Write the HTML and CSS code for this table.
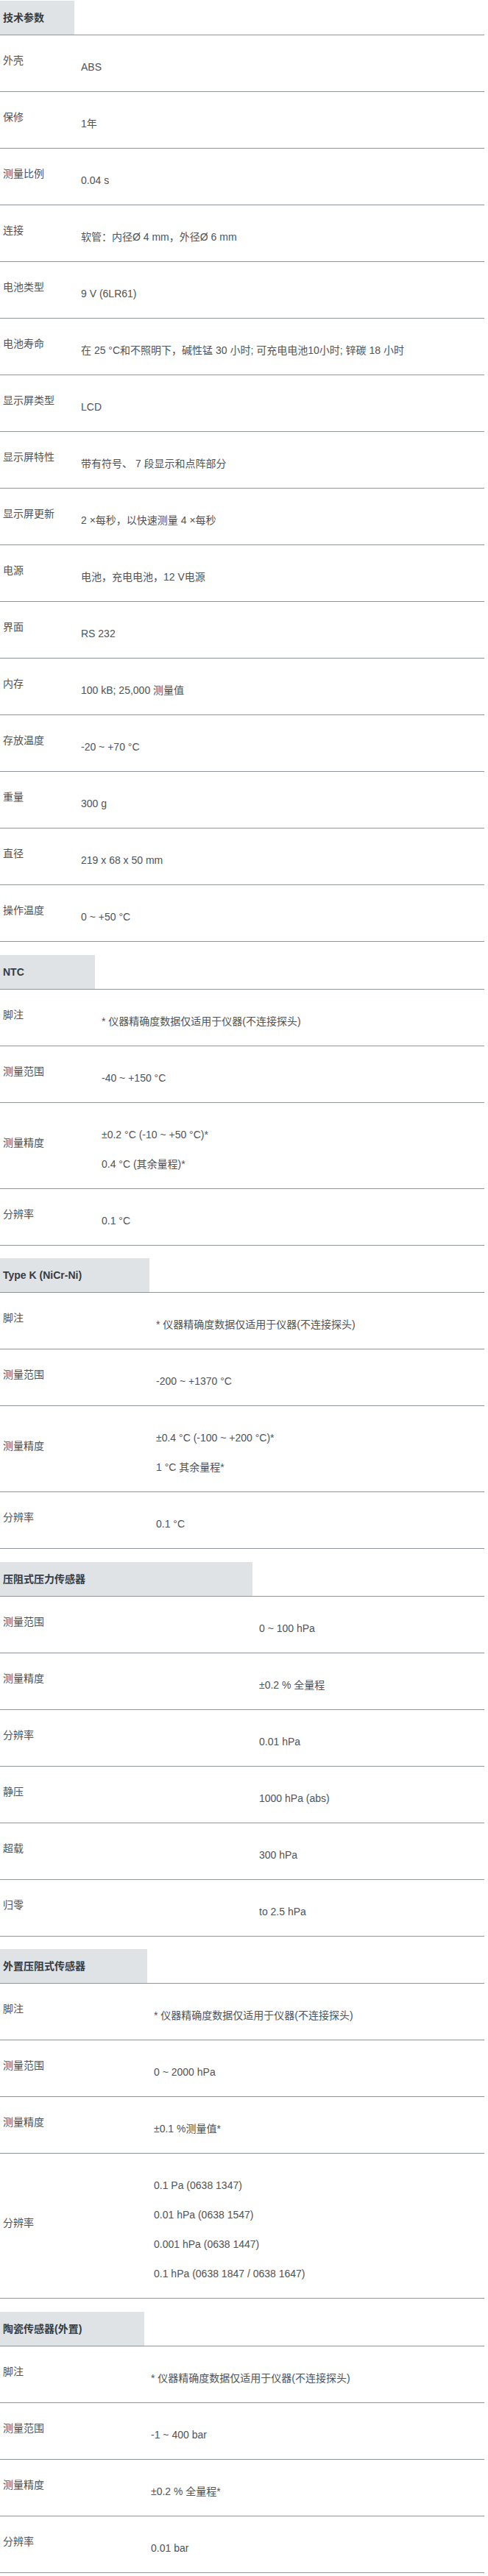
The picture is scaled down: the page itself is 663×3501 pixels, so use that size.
FILE: index.html
```html
<!DOCTYPE html>
<html lang="zh-CN">
<head>
  <meta charset="UTF-8">
  <meta name="viewport" content="width=device-width, initial-scale=1.0">
  <title>技术参数</title>
  <link rel="stylesheet" href="styles.css">
</head>

<body>
  <div class="specs">

    <section class="spec spec-general">
      <div class="spec-head"><h3 class="spec-title">技术参数</h3></div>
      <div class="spec-row"><div class="spec-label">外壳</div><div class="spec-value"><p>ABS</p></div></div>
      <div class="spec-row"><div class="spec-label">保修</div><div class="spec-value"><p>1年</p></div></div>
      <div class="spec-row"><div class="spec-label">测量比例</div><div class="spec-value"><p>0.04 s</p></div></div>
      <div class="spec-row"><div class="spec-label">连接</div><div class="spec-value"><p>软管：内径Ø 4 mm，外径Ø 6 mm</p></div></div>
      <div class="spec-row"><div class="spec-label">电池类型</div><div class="spec-value"><p>9 V (6LR61)</p></div></div>
      <div class="spec-row"><div class="spec-label">电池寿命</div><div class="spec-value"><p>在 25 °C和不照明下，碱性锰 30 小时; 可充电电池10小时; 锌碳 18 小时</p></div></div>
      <div class="spec-row"><div class="spec-label">显示屏类型</div><div class="spec-value"><p>LCD</p></div></div>
      <div class="spec-row"><div class="spec-label">显示屏特性</div><div class="spec-value"><p>带有符号、 7 段显示和点阵部分</p></div></div>
      <div class="spec-row"><div class="spec-label">显示屏更新</div><div class="spec-value"><p>2 ×每秒，以快速测量 4 ×每秒</p></div></div>
      <div class="spec-row"><div class="spec-label">电源</div><div class="spec-value"><p>电池，充电电池，12 V电源</p></div></div>
      <div class="spec-row"><div class="spec-label">界面</div><div class="spec-value"><p>RS 232</p></div></div>
      <div class="spec-row"><div class="spec-label">内存</div><div class="spec-value"><p>100 kB; 25,000 测量值</p></div></div>
      <div class="spec-row"><div class="spec-label">存放温度</div><div class="spec-value"><p>-20 ~ +70 °C</p></div></div>
      <div class="spec-row"><div class="spec-label">重量</div><div class="spec-value"><p>300 g</p></div></div>
      <div class="spec-row"><div class="spec-label">直径</div><div class="spec-value"><p>219 x 68 x 50 mm</p></div></div>
      <div class="spec-row"><div class="spec-label">操作温度</div><div class="spec-value"><p>0 ~ +50 °C</p></div></div>
    </section>

    <section class="spec spec-ntc">
      <div class="spec-head"><h3 class="spec-title">NTC</h3></div>
      <div class="spec-row"><div class="spec-label">脚注</div><div class="spec-value"><p>* 仪器精确度数据仅适用于仪器(不连接探头)</p></div></div>
      <div class="spec-row"><div class="spec-label">测量范围</div><div class="spec-value"><p>-40 ~ +150 °C</p></div></div>
      <div class="spec-row"><div class="spec-label">测量精度</div><div class="spec-value"><p>±0.2 °C (-10 ~ +50 °C)*</p><p>0.4 °C (其余量程)*</p></div></div>
      <div class="spec-row"><div class="spec-label">分辨率</div><div class="spec-value"><p>0.1 °C</p></div></div>
    </section>

    <section class="spec spec-typek">
      <div class="spec-head"><h3 class="spec-title">Type K (NiCr-Ni)</h3></div>
      <div class="spec-row"><div class="spec-label">脚注</div><div class="spec-value"><p>* 仪器精确度数据仅适用于仪器(不连接探头)</p></div></div>
      <div class="spec-row"><div class="spec-label">测量范围</div><div class="spec-value"><p>-200 ~ +1370 °C</p></div></div>
      <div class="spec-row"><div class="spec-label">测量精度</div><div class="spec-value"><p>±0.4 °C (-100 ~ +200 °C)*</p><p>1 °C 其余量程*</p></div></div>
      <div class="spec-row"><div class="spec-label">分辨率</div><div class="spec-value"><p>0.1 °C</p></div></div>
    </section>

    <section class="spec spec-piezo">
      <div class="spec-head"><h3 class="spec-title">压阻式压力传感器</h3></div>
      <div class="spec-row"><div class="spec-label">测量范围</div><div class="spec-value"><p>0 ~ 100 hPa</p></div></div>
      <div class="spec-row"><div class="spec-label">测量精度</div><div class="spec-value"><p>±0.2 % 全量程</p></div></div>
      <div class="spec-row"><div class="spec-label">分辨率</div><div class="spec-value"><p>0.01 hPa</p></div></div>
      <div class="spec-row"><div class="spec-label">静压</div><div class="spec-value"><p>1000 hPa (abs)</p></div></div>
      <div class="spec-row"><div class="spec-label">超载</div><div class="spec-value"><p>300 hPa</p></div></div>
      <div class="spec-row"><div class="spec-label">归零</div><div class="spec-value"><p>to 2.5 hPa</p></div></div>
    </section>

    <section class="spec spec-external">
      <div class="spec-head"><h3 class="spec-title">外置压阻式传感器</h3></div>
      <div class="spec-row"><div class="spec-label">脚注</div><div class="spec-value"><p>* 仪器精确度数据仅适用于仪器(不连接探头)</p></div></div>
      <div class="spec-row"><div class="spec-label">测量范围</div><div class="spec-value"><p>0 ~ 2000 hPa</p></div></div>
      <div class="spec-row"><div class="spec-label">测量精度</div><div class="spec-value"><p>±0.1 %测量值*</p></div></div>
      <div class="spec-row">
        <div class="spec-label">分辨率</div>
        <div class="spec-value">
          <p>0.1 Pa (0638 1347)</p>
          <p>0.01 hPa (0638 1547)</p>
          <p>0.001 hPa (0638 1447)</p>
          <p>0.1 hPa (0638 1847 / 0638 1647)</p>
        </div>
      </div>
    </section>

    <section class="spec spec-ceramic">
      <div class="spec-head"><h3 class="spec-title">陶瓷传感器(外置)</h3></div>
      <div class="spec-row"><div class="spec-label">脚注</div><div class="spec-value"><p>* 仪器精确度数据仅适用于仪器(不连接探头)</p></div></div>
      <div class="spec-row"><div class="spec-label">测量范围</div><div class="spec-value"><p>-1 ~ 400 bar</p></div></div>
      <div class="spec-row"><div class="spec-label">测量精度</div><div class="spec-value"><p>±0.2 % 全量程*</p></div></div>
      <div class="spec-row"><div class="spec-label">分辨率</div><div class="spec-value"><p>0.01 bar</p></div></div>
    </section>

  </div>
</body>
</html>
```

FILE: styles.css
```css
body {
  margin: 0;
  padding-top: 1px;
  font-family: "Liberation Sans", "Noto Sans CJK SC", sans-serif;
  font-size: 14px;
  color: #4e5358;
  background: #fff;
}

.specs {
  width: 658px;
}

.spec {
  --col: 101px;
}

.spec + .spec {
  margin-top: 17.5px;
}

.spec-general { --col: 101px; }
.spec-ntc { --col: 129px; }
.spec-typek { --col: 203px; }
.spec-piezo { --col: 343px; }
.spec-external { --col: 200px; }
.spec-ceramic { --col: 196px; }

.spec-head {
  border-bottom: 1px solid #8d969c;
}

.spec-title {
  width: var(--col);
  box-sizing: border-box;
  margin: 0;
  padding-left: 4px;
  height: 46px;
  line-height: 46px;
  background-color: #dfe3e6;
  font-size: 14px;
  font-weight: bold;
  color: #343b42;
}

.spec-row {
  display: flex;
  align-items: center;
  border-bottom: 1px solid #8d969c;
}

.spec-label {
  width: var(--col);
  flex-shrink: 0;
  box-sizing: border-box;
  padding: 0 0 8px 4px;
  line-height: 20px;
}

.spec-value {
  flex: 1;
  align-self: stretch;
  padding: 33px 0 23px 9px;
}

.spec-value p {
  margin: 0;
  line-height: 20px;
}

.spec-value p + p {
  margin-top: 20px;
}
```
